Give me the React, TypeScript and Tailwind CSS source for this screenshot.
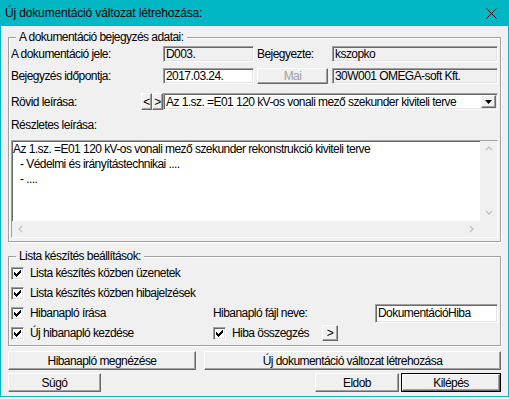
import type { ReactNode } from 'react';

const sunken =
  'border border-t-[#a0a0a0] border-l-[#a0a0a0] border-b-white border-r-white shadow-[inset_1px_1px_0_#696969,inset_-1px_-1px_0_#e3e3e3]';
const raised =
  'border border-t-white border-l-white border-b-[#696969] border-r-[#696969] shadow-[inset_-1px_-1px_0_#a0a0a0]';

function Field({ value, white = false, className = '' }: { value: string; white?: boolean; className?: string }) {
  return (
    <div
      className={`${sunken} ${white ? 'bg-white' : 'bg-[#f0f0f0]'} flex items-center pl-[2px] whitespace-nowrap overflow-hidden ${className}`}
    >
      {value}
    </div>
  );
}

function Btn({
  children,
  className = '',
  disabled = false,
}: {
  children: ReactNode;
  className?: string;
  disabled?: boolean;
}) {
  return (
    <button
      className={`${raised} bg-[#f0f0f0] flex items-center justify-center whitespace-nowrap ${disabled ? 'text-[#a0a0a0]' : 'text-black'} ${className}`}
    >
      {children}
    </button>
  );
}

function Check({ label }: { label: string }) {
  return (
    <div className="flex items-center gap-[6px]">
      <span className={`${sunken} bg-white w-[13px] h-[13px] flex items-center justify-center`}>
        <svg width="7" height="7" viewBox="0 0 7 7" shapeRendering="crispEdges">
          <path
            d="M6 0h1v1h-1z M5 1h2v1h-2z M0 2h1v1h-1z M4 2h3v1h-3z M0 3h2v1h-2z M3 3h3v1h-3z M0 4h5v1h-5z M1 5h3v1h-3z M2 6h1v1h-1z"
            fill="#000"
          />
        </svg>
      </span>
      <span>{label}</span>
    </div>
  );
}

function Group({ title, className = '', children }: { title: string; className?: string; children: ReactNode }) {
  return (
    <fieldset className={`border border-[#a0a0a0] shadow-[1px_1px_0_#fff,inset_1px_1px_0_#fff] mx-[7px] ${className}`}>
      <legend className="ml-[5px] px-[3px] leading-[14px] bg-[#f0f0f0]">{title}</legend>
      {children}
    </fieldset>
  );
}

function Chevron({ dir }: { dir: 'up' | 'down' | 'left' | 'right' }) {
  const d = {
    up: 'M1 5 L4 2 L7 5',
    down: 'M1 2 L4 5 L7 2',
    left: 'M5 1 L2 4 L5 7',
    right: 'M3 1 L6 4 L3 7',
  }[dir];
  return (
    <svg width="8" height="8" viewBox="0 0 8 8">
      <path d={d} fill="none" stroke="#c2c2c2" strokeWidth="1.3" />
    </svg>
  );
}

export default function App() {
  return (
    <div className="w-[509px] h-[397px] flex flex-col font-['Liberation_Sans',Arial,sans-serif] text-[12px] text-black tracking-[-0.55px]">
      {/* Title bar */}
      <div className="h-[26px] bg-[#00b7c3] flex items-center justify-between pl-[5px] pr-[12px] shrink-0">
        <span className="tracking-[-0.15px]">Új dokumentáció változat létrehozása:</span>
        <svg width="11" height="11" viewBox="0 0 11 11">
          <path d="M0.5 0.5 L10.5 10.5 M10.5 0.5 L0.5 10.5" stroke="#000" strokeWidth="1" />
        </svg>
      </div>

      <div className="flex-1 bg-[#f0f0f0] border-x border-b border-[#00b7c3] flex flex-col pb-[4px]">
        <Group title="A dokumentáció bejegyzés adatai:" className="mt-[4px] pl-[2px] pb-[3px]">
          <div className="flex items-center h-[16px] mt-[2px]">
            <span className="w-[152px]">A dokumentáció jele:</span>
            <Field value="D003." className="w-[91px] h-[16px]" />
            <span className="w-[75px] ml-[3px]">Bejegyezte:</span>
            <Field value="kszopko" className="w-[166px] h-[16px]" />
          </div>
          <div className="flex items-center h-[16px] mt-[6px]">
            <span className="w-[152px]">Bejegyzés időpontja:</span>
            <Field value="2017.03.24." white className="w-[91px] h-[16px]" />
            <Btn disabled className="w-[71px] h-[16px] ml-[3px]">
              Mai
            </Btn>
            <Field value="30W001 OMEGA-soft Kft." className="w-[166px] h-[16px] ml-[4px]" />
          </div>
          <div className="flex items-center h-[17px] mt-[9px]">
            <span className="w-[130px]">Rövid leírása:</span>
            <Btn className="w-[11px] h-[17px]">&lt;</Btn>
            <Btn className="w-[11px] h-[17px]">&gt;</Btn>
            <div className={`${sunken} bg-white w-[335px] h-[17px] flex items-center pl-[2px] pr-[1px]`}>
              <span className="flex-1 whitespace-nowrap overflow-hidden">
                Az 1.sz. =E01 120 kV-os vonali mező szekunder kiviteli terve
              </span>
              <span className={`${raised} bg-[#f0f0f0] w-[15px] h-[13px] flex items-center justify-center`}>
                <svg width="7" height="4" viewBox="0 0 7 4">
                  <path d="M0 0 H7 L3.5 4 Z" fill="#000" />
                </svg>
              </span>
            </div>
          </div>
          <div className="h-[14px] mt-[8px] flex items-center">Részletes leírása:</div>
          <div
            className={`${sunken} border-t-[#a0a0a0] mt-[8px] w-[487px] h-[98px] bg-white grid grid-cols-[1fr_17px] grid-rows-[1fr_16px]`}
          >
            <div className="pt-[1px] pl-[1px] leading-[15px] whitespace-nowrap overflow-hidden">
              <div>Az 1.sz. =E01 120 kV-os vonali mező szekunder rekonstrukció kiviteli terve</div>
              <div className="pl-[7px]">- Védelmi és irányítástechnikai ....</div>
              <div className="pl-[7px]">- ....</div>
            </div>
            <div className="bg-[#f0f0f0] flex flex-col items-center justify-between py-[4px]">
              <Chevron dir="up" />
              <Chevron dir="down" />
            </div>
            <div className="bg-[#f0f0f0] flex items-center justify-between px-[5px]">
              <Chevron dir="left" />
              <Chevron dir="right" />
            </div>
            <div className="bg-[#f0f0f0]" />
          </div>
        </Group>

        <Group title="Lista készítés beállítások:" className="mt-[7px] pl-[2px] pb-[2px]">
          <div className="h-[20px] flex items-center">
            <Check label="Lista készítés közben üzenetek" />
          </div>
          <div className="h-[20px] flex items-center">
            <Check label="Lista készítés közben hibajelzések" />
          </div>
          <div className="h-[20px] flex items-center">
            <div className="w-[202px]">
              <Check label="Hibanapló írása" />
            </div>
            <span className="w-[162px]">Hibanapló fájl neve:</span>
            <Field value="DokumentációHiba" white className="w-[123px] h-[19px]" />
          </div>
          <div className="h-[20px] flex items-center">
            <div className="w-[202px]">
              <Check label="Új hibanapló kezdése" />
            </div>
            <div className="w-[109px]">
              <Check label="Hiba összegzés" />
            </div>
            <Btn className="w-[16px] h-[16px]">&gt;</Btn>
          </div>
        </Group>

        <div className="flex justify-between mx-[7px] mt-[5px] h-[19px]">
          <Btn className="w-[188px] h-[19px]">Hibanapló megnézése</Btn>
          <Btn className="w-[297px] h-[19px]">Új dokumentáció változat létrehozása</Btn>
        </div>
        <div className="flex mx-[7px] mt-[3px] h-[19px]">
          <Btn className="w-[93px] h-[19px]">Súgó</Btn>
          <div className="flex-1" />
          <Btn className="w-[84px] h-[19px]">Eldob</Btn>
          <div className="w-[100px] h-[19px] ml-[2px] border border-black">
            <Btn className="w-full h-full">Kilépés</Btn>
          </div>
        </div>
      </div>
    </div>
  );
}
